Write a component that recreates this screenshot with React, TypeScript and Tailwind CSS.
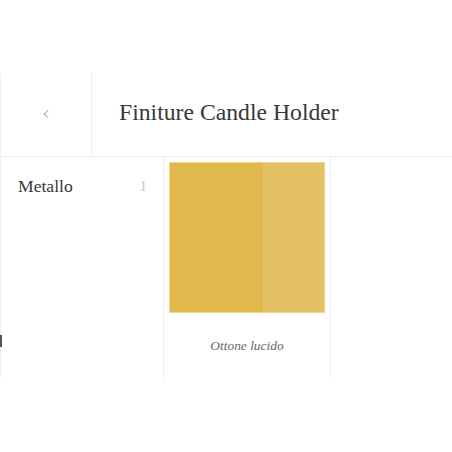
import { ChevronLeft } from "lucide-react";

export default function App() {
  return (
    <div className="w-[452px] h-[452px] bg-white overflow-hidden pt-[73px] font-['Liberation_Serif',serif]">
      <div className="relative border-l border-[#f1f1f1] h-[305px]">
        {/* header */}
        <div className="flex h-[84px] border-b border-[#ececec]">
          <div className="w-[91px] border-r border-[#ececec] flex items-center justify-center pb-[2px]">
            <ChevronLeft className="h-[14px] w-[14px] text-[#777]" strokeWidth={1.5} />
          </div>
          <div className="flex items-center pl-[27px] pb-[4px]">
            <h1 className="text-[23.7px] text-[#383838] leading-none">Finiture Candle Holder</h1>
          </div>
        </div>

        {/* body */}
        <div className="flex h-[221px]">
          <div className="w-[163px] border-r border-[#ececec] pt-[16px] pl-[17px] pr-[16px]">
            <div className="flex items-center justify-between">
              <span className="text-[17.6px] text-[#383838]">Metallo</span>
              <span className="text-[15px] text-[#c8c8c8]">1</span>
            </div>
          </div>
          <div className="w-[167px] border-r border-[#ececec] flex flex-col items-center pt-[5px]">
            <div className="flex w-[156px] h-[151px] border border-[#efd588]">
              <div className="w-[93px] bg-[#e0b84c]" />
              <div className="flex-1 bg-[#e3c164]" />
            </div>
            <p className="mt-[23px] text-[13.4px] italic text-[#666]">Ottone lucido</p>
          </div>
        </div>

        <div className="absolute -left-px top-[262px] w-[2px] h-[12px] bg-[#555]" />
      </div>
    </div>
  );
}
